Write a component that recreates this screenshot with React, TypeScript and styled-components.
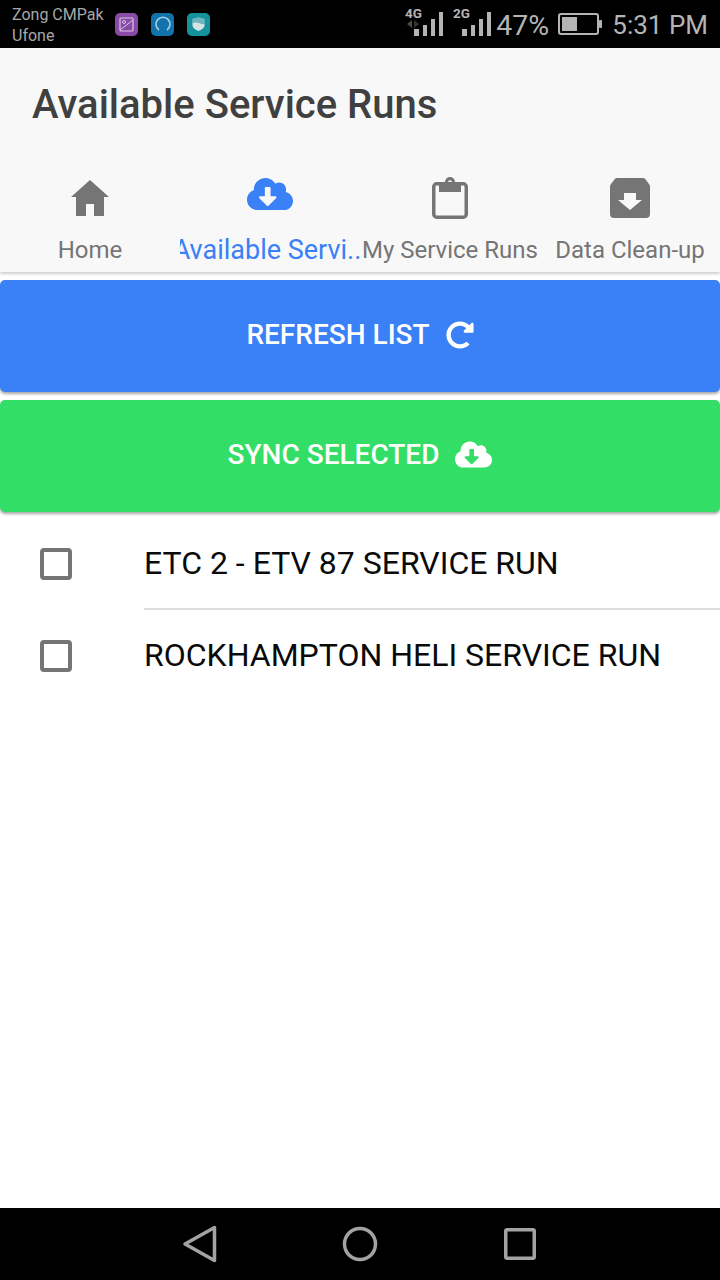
import React from "react";
import styled, { createGlobalStyle } from "styled-components";
import { FaCloudDownloadAlt, FaRedoAlt } from "react-icons/fa";

const GlobalStyle = createGlobalStyle`
  html, body {
    margin: 0;
    padding: 0;
    background: #fff;
    font-family: Roboto, "Liberation Sans", sans-serif;
  }
`;

const Screen = styled.div`
  display: flex;
  flex-direction: column;
  width: 720px;
  height: 1280px;
  overflow: hidden;
  background: #fff;
`;

const StatusBar = styled.div`
  display: flex;
  align-items: center;
  justify-content: space-between;
  height: 48px;
  padding: 0 12px;
  background: #000;
  color: #b4b4b4;
  flex: none;
`;

const StatusLeft = styled.div`
  display: flex;
  align-items: center;
`;

const Carriers = styled.div`
  width: 103px;
  font-size: 16px;
  line-height: 21px;
  color: #a8a8a8;
  margin-top: 1px;
`;

const AppIcons = styled.div`
  display: flex;
  gap: 13px;
`;

const StatusRight = styled.div`
  display: flex;
  align-items: center;
`;

const SignalSvg = styled.svg`
  margin-bottom: 8px;
  & + & {
    margin-left: 9px;
  }
`;

const Percent = styled.span`
  width: 52px;
  font-size: 28.5px;
  margin: 2px 10px 0 4px;
`;

const Clock = styled.span`
  font-size: 26px;
  margin: 2px 0 0 10px;
`;

const Header = styled.div`
  position: relative;
  z-index: 1;
  flex: none;
  height: 224px;
  background: #f8f8f8;
  box-shadow: 0 2px 3px rgba(0, 0, 0, 0.2);
`;

const Title = styled.h1`
  margin: 0;
  padding: 31px 0 0 32px;
  height: 79px;
  box-sizing: content-box;
  font-size: 40px;
  line-height: 52px;
  font-weight: 500;
  color: #404040;
`;

const Tabs = styled.div`
  display: grid;
  grid-template-columns: repeat(4, 180px);
  margin-top: 18px;
`;

const Tab = styled.div`
  display: flex;
  flex-direction: column;
  align-items: center;
  min-width: 0;
  overflow: hidden;
`;

const TabIcon = styled.div<{ $active?: boolean }>`
  display: flex;
  align-items: center;
  justify-content: center;
  height: 44px;
  color: ${(p) => (p.$active ? "#3a80f6" : "#757575")};
`;

const RaisedCloud = styled(FaCloudDownloadAlt)`
  margin-bottom: 8px;
`;

const TabLabel = styled.div<{ $active?: boolean }>`
  display: flex;
  justify-content: center;
  width: 100%;
  box-sizing: border-box;
  padding-right: ${(p) => (p.$active ? "6px" : "0")};
  margin-top: 14px;
  height: 32px;
  font-size: ${(p) => (p.$active ? "27px" : "24px")};
  line-height: 32px;
  white-space: nowrap;
  color: ${(p) => (p.$active ? "#3a80f6" : "#757575")};
`;

const Actions = styled.div`
  display: flex;
  flex-direction: column;
  gap: 8px;
  padding-top: 8px;
  flex: none;
`;

const ActionButton = styled.button<{ $color: string }>`
  display: flex;
  align-items: center;
  justify-content: center;
  gap: 16px;
  height: 112px;
  width: 720px;
  padding: 0 0 3px;
  border: 0;
  border-radius: 5px;
  background: ${(p) => p.$color};
  color: #fff;
  font-family: inherit;
  font-size: 28px;
  font-weight: 500;
  box-shadow: 0 2px 3px rgba(0, 0, 0, 0.35);
`;

const List = styled.div`
  flex: 1;
  padding-top: 6px;
`;

const Row = styled.div`
  display: flex;
  height: 92px;
`;

const CheckCell = styled.div`
  display: flex;
  align-items: center;
  width: 144px;
  padding: 0 0 0 40px;
  box-sizing: border-box;
  flex: none;
`;

const Check = styled.span`
  display: block;
  width: 32px;
  height: 32px;
  box-sizing: border-box;
  border: 4px solid #757575;
  border-radius: 4px;
`;

const RowText = styled.div<{ $divider?: boolean }>`
  flex: 1;
  display: flex;
  align-items: center;
  font-size: 32px;
  color: #0a0a0a;
  border-bottom: 2px solid ${(p) => (p.$divider ? "#dddddd" : "transparent")};
`;

const NavBar = styled.div`
  display: flex;
  align-items: center;
  justify-content: center;
  gap: 120px;
  height: 72px;
  background: #000;
  flex: none;
`;

const AppBadge = ({ bg, children }: { bg: string; children: React.ReactNode }) => (
  <svg width="23" height="23" viewBox="0 0 23 23">
    <rect width="23" height="23" rx="5" fill={bg} />
    {children}
  </svg>
);

const Signal = ({ label, arrows }: { label: string; arrows?: boolean }) => (
  <SignalSvg width="39" height="32" viewBox="0 -4 39 32">
    <text x="0" y="10" fontFamily="Roboto, sans-serif" fontWeight="700" fontSize="13.5" fill="#b4b4b4">
      {label}
    </text>
    {arrows && (
      <>
        <path d="M2 16l5-4v8z" fill="#4a4a4a" />
        <path d="M14 16l-5-4v8z" fill="#333" />
      </>
    )}
    <rect x="9" y="21" width="5" height="7" fill="#b4b4b4" />
    <rect x="18" y="17" width="4" height="11" fill="#b4b4b4" />
    <rect x="26" y="11" width="4" height="17" fill="#b4b4b4" />
    <rect x="34" y="4" width="4" height="24" fill="#b4b4b4" />
  </SignalSvg>
);

const Battery = () => (
  <svg width="44" height="22" viewBox="0 0 44 22">
    <rect x="1" y="1" width="39" height="20" rx="2" fill="none" stroke="#b4b4b4" strokeWidth="2" />
    <rect x="4" y="4" width="15" height="14" fill="#b4b4b4" />
    <rect x="41" y="7" width="3" height="8" rx="1" fill="#b4b4b4" />
  </svg>
);

const HomeIcon = () => (
  <svg width="38" height="36" viewBox="0 0 38 36">
    <path d="M19 0L38 17h-5v19H23V24h-8v12H5V17H0z" fill="currentColor" />
  </svg>
);

const ClipboardIcon = () => (
  <svg width="36" height="42" viewBox="0 0 36 42">
    <rect x="1.75" y="6.75" width="32.5" height="33.5" rx="3" fill="none" stroke="currentColor" strokeWidth="3.5" />
    <path
      d="M7 5h6a5 5 0 0 1 10 0h6v10H7zM18 3.2a2 2 0 1 0 0 4 2 2 0 0 0 0-4z"
      fill="currentColor"
      fillRule="evenodd"
    />
  </svg>
);

const ArchiveIcon = () => (
  <svg width="40" height="40" viewBox="0 0 40 40">
    <path
      fillRule="evenodd"
      fill="currentColor"
      d="M7 0h26a3 3 0 0 1 2.4 1.2L39 6a4 4 0 0 1 1 2.6V36a4 4 0 0 1-4 4H4a4 4 0 0 1-4-4V8.6A4 4 0 0 1 1 6l3.6-4.8A3 3 0 0 1 7 0zM14 15v7H8l12 10 12-10h-6v-7z"
    />
  </svg>
);

export default function App() {
  return (
    <Screen>
      <GlobalStyle />
      <StatusBar>
        <StatusLeft>
          <Carriers>
            Zong CMPak
            <br />
            Ufone
          </Carriers>
          <AppIcons>
            <AppBadge bg="#8a4aa8">
              <rect x="5" y="5" width="13" height="13" rx="1" fill="none" stroke="#d8c8e0" strokeWidth="1.2" />
              <circle cx="9" cy="9" r="1.5" fill="none" stroke="#d8c8e0" />
              <path d="M5 17L18 7" stroke="#d8c8e0" strokeWidth="1" />
            </AppBadge>
            <AppBadge bg="#1172ac">
              <path d="M8 17a7 7 0 1 1 8 0" fill="none" stroke="#a8cfe4" strokeWidth="1.6" />
            </AppBadge>
            <AppBadge bg="#16929c">
              <path d="M5.5 6c4-2 8-2 12 0v7c-1 3-4 4-6 5-2-1-5-2-6-5z" fill="#d4e4e4" />
              <path d="M5.5 6c4-2 8-2 12 0v5c-4 1-6-3-12-1z" fill="#16929c" opacity="0.55" />
            </AppBadge>
          </AppIcons>
        </StatusLeft>
        <StatusRight>
          <Signal label="4G" arrows />
          <Signal label="2G" />
          <Percent>47%</Percent>
          <Battery />
          <Clock>5:31 PM</Clock>
        </StatusRight>
      </StatusBar>
      <Header>
        <Title>Available Service Runs</Title>
        <Tabs>
          <Tab>
            <TabIcon>
              <HomeIcon />
            </TabIcon>
            <TabLabel>Home</TabLabel>
          </Tab>
          <Tab>
            <TabIcon $active>
              <RaisedCloud size={46} />
            </TabIcon>
            <TabLabel $active>Available Servi..</TabLabel>
          </Tab>
          <Tab>
            <TabIcon>
              <ClipboardIcon />
            </TabIcon>
            <TabLabel>My Service Runs</TabLabel>
          </Tab>
          <Tab>
            <TabIcon>
              <ArchiveIcon />
            </TabIcon>
            <TabLabel>Data Clean-up</TabLabel>
          </Tab>
        </Tabs>
      </Header>
      <Actions>
        <ActionButton $color="#3a80f6">
          REFRESH LIST
          <FaRedoAlt size={28} />
        </ActionButton>
        <ActionButton $color="#33de66">
          SYNC SELECTED
          <FaCloudDownloadAlt size={37} />
        </ActionButton>
      </Actions>
      <List>
        <Row>
          <CheckCell>
            <Check />
          </CheckCell>
          <RowText $divider>ETC 2 - ETV 87 SERVICE RUN</RowText>
        </Row>
        <Row>
          <CheckCell>
            <Check />
          </CheckCell>
          <RowText>ROCKHAMPTON HELI SERVICE RUN</RowText>
        </Row>
      </List>
      <NavBar>
        <svg width="40" height="40" viewBox="0 0 40 40">
          <path d="M34.5 3.5v33L5 20z" fill="none" stroke="#a3a3a3" strokeWidth="3.5" strokeLinejoin="round" />
        </svg>
        <svg width="40" height="40" viewBox="0 0 40 40">
          <circle cx="20" cy="20" r="15.5" fill="none" stroke="#a3a3a3" strokeWidth="3.5" />
        </svg>
        <svg width="40" height="40" viewBox="0 0 40 40">
          <rect x="5.75" y="5.75" width="28.5" height="28.5" rx="1.5" fill="none" stroke="#a3a3a3" strokeWidth="3.5" />
        </svg>
      </NavBar>
    </Screen>
  );
}
